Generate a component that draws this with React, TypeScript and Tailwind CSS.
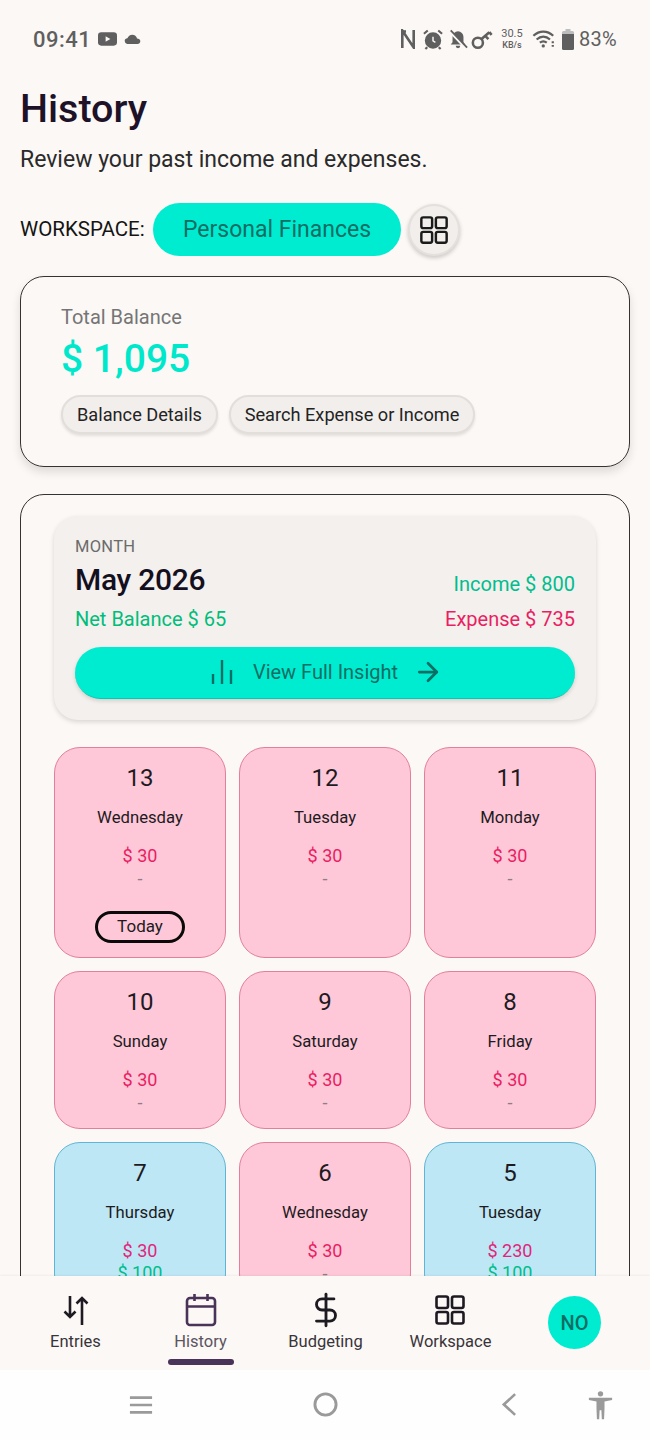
import { ArrowRight, DollarSign } from "lucide-react";

const days = [
  { day: "13", name: "Wednesday", expense: "$ 30", income: "-", today: true },
  { day: "12", name: "Tuesday", expense: "$ 30", income: "-", tall: true },
  { day: "11", name: "Monday", expense: "$ 30", income: "-", tall: true },
  { day: "10", name: "Sunday", expense: "$ 30", income: "-" },
  { day: "9", name: "Saturday", expense: "$ 30", income: "-" },
  { day: "8", name: "Friday", expense: "$ 30", income: "-" },
  { day: "7", name: "Thursday", expense: "$ 30", income: "$ 100", blue: true },
  { day: "6", name: "Wednesday", expense: "$ 30", income: "-" },
  { day: "5", name: "Tuesday", expense: "$ 230", income: "$ 100", blue: true },
];

const GridIcon = ({ className }: { className?: string }) => (
  <svg viewBox="0 0 32 32" fill="none" stroke="currentColor" strokeWidth="2.6" className={className}>
    <rect x="2.5" y="2.5" width="11.5" height="11.5" rx="2" />
    <rect x="18" y="2.5" width="11.5" height="11.5" rx="2" />
    <rect x="2.5" y="18" width="11.5" height="11.5" rx="2" />
    <rect x="18" y="18" width="11.5" height="11.5" rx="2" />
  </svg>
);

const StatusBar = () => (
  <div className="flex h-[78px] items-center justify-between px-[33px] text-[#5f5f5f]">
    <div className="flex items-center gap-[7px]">
      <span className="text-[22px] font-medium tracking-[0.5px]">09:41</span>
      <svg viewBox="0 0 20 14" className="h-[14px] w-[19px]">
        <rect width="20" height="14" rx="3.5" fill="#5f5f5f" />
        <path d="M8 4.2 13 7l-5 2.8z" fill="#fcf8f5" />
      </svg>
      <svg viewBox="0 0 18 11" className="h-[10px] w-[17px]" fill="#5f5f5f">
        <path d="M4 11a3.4 3.4 0 0 1-3.6-3.2C.4 6 1.8 4.9 3.4 4.8 4.1 2.4 6.3.8 8.7.8c2.6 0 4.8 1.8 5.3 4.2 1.9.1 3.6 1.1 3.6 3 0 1.7-1.4 3-3.1 3z" />
      </svg>
    </div>
    <div className="flex items-center">
      <svg viewBox="0 0 16 20" className="mr-[6px] h-[20px] w-[16px]" fill="none" stroke="#5f5f5f" strokeWidth="2.6">
        <path d="M2.3 19V1.5L13.7 18.5V1" />
        <path d="M2.3 2.5 6 2.5" />
      </svg>
      <svg viewBox="0 0 22 22" className="mr-[4px] h-[21px] w-[22px]" fill="none" stroke="#5f5f5f" strokeWidth="2.2">
        <circle cx="11" cy="12" r="7.5" fill="#5f5f5f" />
        <path d="M11 8v4.5l2.5 1.5" stroke="#fcf8f5" strokeWidth="1.5" />
        <path d="M1.5 5 5.5 1.5M20.5 5l-4-3.5M5 19l-2 2M17 19l2 2" />
      </svg>
      <svg viewBox="0 0 22 22" className="mr-[3px] h-[21px] w-[20px]" fill="#5f5f5f">
        <path d="M11 2a6 6 0 0 1 6 6v6l2 2.5H3L5 14V8a6 6 0 0 1 6-6zM8.5 18h5a2.5 2.5 0 0 1-5 0z" />
        <path d="M2 2l18 19" stroke="#fcf8f5" strokeWidth="3" />
        <path d="M3 1l18 19" stroke="#5f5f5f" strokeWidth="2" />
      </svg>
      <svg viewBox="0 0 24 22" className="mr-[7px] h-[21px] w-[22px]" fill="none" stroke="#5f5f5f" strokeWidth="2.8">
        <circle cx="7.5" cy="14.5" r="5.5" />
        <path d="M11.5 10.5 20 3M15.5 7l3.5 3.5M20 3l2.5 3" />
      </svg>
      <div className="mr-[8px] flex w-[24px] flex-col items-center text-[#5f5f5f]">
        <span className="text-[11px] leading-[12px]">30.5</span>
        <span className="text-[9px] font-medium leading-[11px]">KB/s</span>
      </div>
      <svg viewBox="0 0 26 20" className="mr-[6px] h-[20px] w-[24px]" fill="none" stroke="#5f5f5f" strokeWidth="2.4">
        <path d="M1.5 6.5c6.5-6 15-6 21.5 0M5 10.5c4.5-4 10-4 14.5 0M8.5 14c2.5-2 5-2 7.5 0" />
        <circle cx="12.2" cy="17.5" r="1.8" fill="#5f5f5f" stroke="none" />
        <path d="M22.5 12.5v2M22.5 16.5v2" strokeWidth="2.4" />
      </svg>
      <svg viewBox="0 0 12 21" className="mr-[5px] h-[21px] w-[12px]">
        <path d="M3.5 0h5v2h2a1.5 1.5 0 0 1 1.5 1.5V7H0V3.5A1.5 1.5 0 0 1 1.5 2h2z" fill="#bdbdbd" />
        <path d="M0 5h12v14.5a1.5 1.5 0 0 1-1.5 1.5h-9A1.5 1.5 0 0 1 0 19.5z" fill="#5f5f5f" />
      </svg>
      <span className="text-[20px] tracking-[0.3px]">83%</span>
    </div>
  </div>
);

const DayCard = ({ d }: { d: (typeof days)[number] }) => (
  <div
    className={`flex flex-col items-center rounded-[26px] border-[1.5px] px-2 pt-[14px] ${
      d.blue ? "border-[#5fb6d4] bg-[#bee7f5]" : "border-[#e27f9c] bg-[#ffc8d8]"
    } ${d.today || d.tall ? "h-[211px]" : "h-[158px]"}`}
  >
    <div className="text-[24px] leading-[32px] text-[#1d1a22]">{d.day}</div>
    <div className="mt-[12px] text-[16.7px] leading-[24px] text-[#1d1a22]">{d.name}</div>
    <div className={`mt-[15px] text-[18px] leading-[22px] ${d.blue ? "text-[#e0267c]" : "text-[#e91e63]"}`}>{d.expense}</div>
    <div className={`text-[18px] leading-[22px] ${d.income === "-" ? "mt-px text-[#8d7f84]" : "text-[#00bd8d]"}`}>{d.income}</div>
    {d.today && (
      <div className="mt-[21px] flex h-[32px] w-[90px] items-center justify-center rounded-full border-[3px] border-[#0a0a0a] text-[17px] text-[#1d1a22]">
        Today
      </div>
    )}
  </div>
);

const NavItem = ({ label, children, active }: { label: string; children: React.ReactNode; active?: boolean }) => (
  <div className="relative flex h-full w-[125px] flex-col items-center pt-[16px]">
    <div className="flex h-[36px] items-center justify-center">{children}</div>
    <span className={`mt-[3px] text-[16.5px] leading-[22px] ${active ? "text-[#5b5560]" : "text-[#38343a]"}`}>{label}</span>
    {active && <div className="absolute bottom-[5px] h-[6px] w-[66px] rounded-full bg-[#4a3358]" />}
  </div>
);

export default function App() {
  return (
    <div className="flex h-[1440px] w-[650px] flex-col overflow-hidden bg-[#fcf8f5] font-[Roboto,sans-serif]">
      <StatusBar />
      <main className="min-h-0 flex-1 overflow-hidden px-[20px]">
        <h1 className="mt-[6px] text-[39.5px] font-medium leading-[50px] text-[#1d1228]">History</h1>
        <p className="mt-[11px] text-[23px] leading-[30px] text-[#2a2a2a]">Review your past income and expenses.</p>
        <div className="mt-[28px] flex items-center">
          <span className="w-[125px] pb-[1px] text-[20.5px] text-[#141414]">WORKSPACE:</span>
          <div className="ml-[8px] flex h-[53px] w-[248px] items-center justify-center rounded-full bg-[#00ecd0] pt-[1px] text-[23px] text-[#0b6e64]">
            Personal Finances
          </div>
          <div className="ml-[7px] flex h-[52px] w-[52px] items-center justify-center rounded-full border-2 border-[#e4e0dc] bg-[#f1eeeb] shadow-[0_2px_4px_rgba(0,0,0,0.2)]">
            <GridIcon className="h-[30px] w-[30px] text-[#1a1a1a]" />
          </div>
        </div>

        <section className="mt-[20px] h-[191px] rounded-[24px] border border-[#333] px-[40px] pt-[27px] shadow-[0_5px_10px_rgba(0,0,0,0.12)]">
          <div className="text-[20px] leading-[26px] text-[#757575]">Total Balance</div>
          <div className="mt-[5px] text-[39px] font-medium leading-[48px] text-[#00e8cb]">$ 1,095</div>
          <div className="mt-[12px] flex gap-[11px]">
            <div className="flex h-[39px] w-[157px] items-center justify-center rounded-full border-2 border-[#e2dfdb] bg-[#f1eeeb] text-[18.2px] text-[#232323] shadow-[0_2px_3px_rgba(0,0,0,0.1)]">
              Balance Details
            </div>
            <div className="flex h-[39px] w-[246px] items-center justify-center rounded-full border-2 border-[#e2dfdb] bg-[#f1eeeb] text-[18.2px] text-[#232323] shadow-[0_2px_3px_rgba(0,0,0,0.1)]">
              Search Expense or Income
            </div>
          </div>
        </section>

        <section className="mt-[27px] rounded-t-[24px] border border-[#333] px-[33px] pt-[21px]">
          <div className="h-[204px] rounded-[24px] bg-[#f3f0ed] px-[21px] pt-[21px] shadow-[0_2px_5px_rgba(0,0,0,0.14)]">
            <div className="text-[16.5px] leading-[20px] tracking-[0.3px] text-[#6b6b6b]">MONTH</div>
            <div className="flex items-end justify-between">
              <div className="mt-[4px] text-[30px] font-medium leading-[38px] tracking-[-0.3px] text-[#140f1e]">May 2026</div>
              <div className="pb-[2px] text-[20px] leading-[26px] text-[#00bd8d]">Income $ 800</div>
            </div>
            <div className="mt-[7px] flex justify-between text-[20px] leading-[26px]">
              <span className="text-[#00bd7a]">Net Balance $ 65</span>
              <span className="text-[#e91e63]">Expense $ 735</span>
            </div>
            <div className="mt-[15px] flex h-[52px] items-center justify-center rounded-full border-b border-[#00cdb4] bg-[#00ecd0] pb-[1px] pl-[4px] text-[20px] text-[#0b6e64] shadow-[0_2px_4px_rgba(0,0,0,0.14)]">
              <svg viewBox="0 0 22 26" className="mr-[20px] h-[26px] w-[22px]" fill="none" stroke="#0b6e64" strokeWidth="2.4">
                <path d="M2 25V15M11 25V1M20 25V11" />
              </svg>
              View Full Insight
              <ArrowRight className="ml-[15px] h-[30px] w-[30px]" strokeWidth={2.2} />
            </div>
          </div>
          <div className="mt-[27px] grid grid-cols-3 gap-[13px]">
            {days.map((d) => (
              <DayCard key={d.day} d={d} />
            ))}
          </div>
        </section>
      </main>

      <nav className="flex h-[94px] shrink-0 items-start bg-[#fcf8f5] pl-[13px] shadow-[0_-1px_2px_rgba(0,0,0,0.05)]">
        <NavItem label="Entries">
          <svg viewBox="0 0 26 30" className="h-[30px] w-[26px]" fill="none" stroke="#1d1a22" strokeWidth="2.6">
            <path d="M7 1v21M1.5 16.5 7 22l5.5-5.5M19 30V3M13.5 8.5 19 3l5.5 5.5" />
          </svg>
        </NavItem>
        <NavItem label="History" active>
          <svg viewBox="0 0 32 34" className="h-[34px] w-[32px]" fill="none" stroke="#4a3358" strokeWidth="2.6">
            <rect x="2" y="5" width="28" height="27" rx="3" />
            <path d="M2 13.5h28M9.5 1v7M22.5 1v7" />
          </svg>
        </NavItem>
        <NavItem label="Budgeting">
          <DollarSign className="h-[38px] w-[38px] text-[#1d1a22]" strokeWidth={1.8} />
        </NavItem>
        <NavItem label="Workspace">
          <GridIcon className="mr-[2px] h-[32px] w-[32px] text-[#1d1a22]" />
        </NavItem>
        <div className="ml-[35px] mt-[20px] flex h-[53px] w-[53px] items-center justify-center rounded-full bg-[#00ecd0] text-[20px] font-medium text-[#0b6e64]">
          NO
        </div>
      </nav>

      <div className="flex h-[70px] shrink-0 items-center bg-[#fefefe] pb-[1px]">
        <svg viewBox="0 0 26 22" className="ml-[129px] h-[22px] w-[24px]" fill="none" stroke="#9a9a9a" strokeWidth="2.8">
          <path d="M1 3h24M1 11h24M1 19h24" />
        </svg>
        <svg viewBox="0 0 26 26" className="ml-[160px] h-[25px] w-[25px]" fill="none" stroke="#9a9a9a" strokeWidth="3">
          <circle cx="13" cy="13" r="11" />
        </svg>
        <svg viewBox="0 0 17 26" className="ml-[163px] h-[25px] w-[16px]" fill="none" stroke="#9a9a9a" strokeWidth="2.8">
          <path d="M15 2 3 13l12 11" />
        </svg>
        <svg viewBox="0 0 28 32" className="ml-[71px] h-[30px] w-[25px]" fill="#9a9a9a">
          <circle cx="14" cy="3.5" r="3" />
          <path d="M1 8h26v2.5l-8.5 1.5v7.5l-.5 12.5h-2.5l-.5-10h-2l-.5 10H10l-.5-12.5V12L1 10.5z" />
        </svg>
      </div>
    </div>
  );
}
